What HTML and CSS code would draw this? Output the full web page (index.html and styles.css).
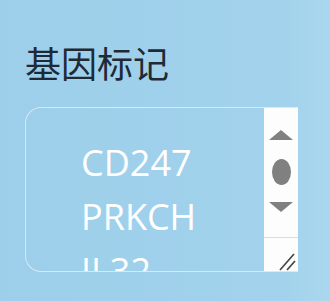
FILE: index.html
```html
<!DOCTYPE html>
<html lang="zh">
<head>
    <meta charset="UTF-8">
    <meta name="viewport" content="width=device-width, initial-scale=1.0">
    <title>基因标记</title>
    <link rel="stylesheet" href="styles.css">
</head>
<body>
    <div class="panel">
        <div class="panel-title">基因标记</div>
        <div class="gene-box">
            <div class="gene-list">
                <div class="gene">CD247</div>
                <div class="gene">PRKCH</div>
                <div class="gene">IL32</div>
            </div>
            <div class="scrollbar">
                <div class="scroll-up"></div>
                <div class="scroll-thumb"></div>
                <div class="scroll-down"></div>
                <div class="scroll-track"></div>
                <div class="resizer">
                    <svg width="18" height="20" viewBox="0 0 18 20">
                        <line x1="1" y1="19" x2="15" y2="3" stroke="#444" stroke-width="1.7"/>
                        <line x1="8" y1="19" x2="16" y2="10" stroke="#444" stroke-width="1.7"/>
                    </svg>
                </div>
            </div>
        </div>
    </div>
</body>
</html>
```

FILE: styles.css
```css
/* Global */
body {
    margin: 0;
    padding: 0;
    width: 330px;
    height: 301px;
    overflow: hidden;
    background: linear-gradient(90deg, #9dcfea 0%, #a2d2ec 85%, #a9d7ee 100%);
    font-family: "Open Sans", "Noto Sans CJK SC", sans-serif;
}

/* Panel */
.panel {
    padding: 39px 0 0 25px;
}

.panel-title {
    font-family: "Noto Sans CJK SC", sans-serif;
    font-size: 36px;
    line-height: 46px;
    color: #1e2a36;
    margin-bottom: 22px;
}

/* Gene box (textarea look) */
.gene-box {
    display: flex;
    width: 272px;
    height: 163px;
    border: 1px solid rgba(255, 255, 255, 0.55);
    border-right: none;
    border-radius: 16px 0 0 16px;
}

.gene-list {
    flex: 1;
    overflow: hidden;
    padding: 28px 0 0 55px;
}

.gene {
    color: #fff;
    font-size: 36px;
    line-height: 54px;
}

/* Scrollbar */
.scrollbar {
    width: 34px;
    background-color: #fdfdfd;
    display: flex;
    flex-direction: column;
    align-items: center;
}

.scroll-up {
    margin-top: 22px;
    width: 0;
    height: 0;
    border-left: 12px solid transparent;
    border-right: 12px solid transparent;
    border-bottom: 10px solid #808080;
}

.scroll-thumb {
    margin-top: 19px;
    width: 19px;
    height: 26px;
    border-radius: 50%;
    background-color: #808080;
}

.scroll-down {
    margin-top: 17px;
    width: 0;
    height: 0;
    border-left: 12px solid transparent;
    border-right: 12px solid transparent;
    border-top: 10px solid #808080;
}

.scroll-track {
    flex: 1;
    width: 100%;
    border-bottom: 1px solid #dcdcdc;
}

.resizer {
    width: 100%;
    height: 33px;
    display: flex;
    justify-content: flex-end;
    align-items: flex-end;
}

.resizer svg {
    display: block;
    margin: 0 1px 0 0;
}
```
